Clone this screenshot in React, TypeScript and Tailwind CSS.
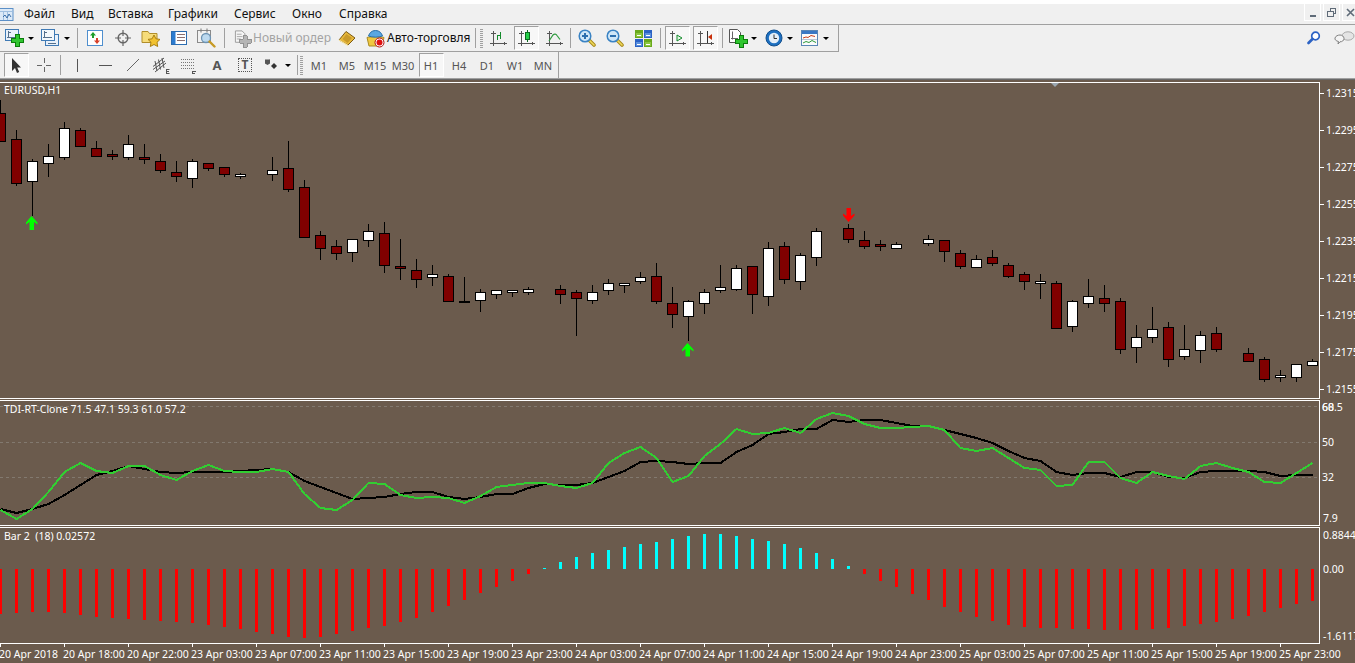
import type { ReactNode } from "react";

type Candle = [number, number, number, number, number, "r" | "w"];

// k, high, body top, body bottom, low, colour
const candles: Candle[] = [
  [0, 100, 113, 142, 142, "r"], [1, 130, 139, 184, 186, "r"], [2, 159, 161, 182, 216, "w"], [3, 144, 156, 164, 177, "w"],
  [4, 122, 128, 158, 160, "w"], [5, 128, 130, 147, 147, "r"], [6, 141, 148, 157, 157, "r"], [7, 150, 154, 157, 160, "r"],
  [8, 135, 144, 158, 160, "w"], [9, 144, 157, 160, 164, "r"], [10, 154, 161, 171, 173, "r"], [11, 161, 172, 177, 182, "r"],
  [12, 159, 161, 179, 188, "w"], [13, 163, 163, 169, 171, "r"], [14, 167, 167, 175, 177, "r"], [15, 173, 174, 177, 179, "w"],
  [17, 157, 170, 175, 181, "w"], [18, 141, 168, 190, 192, "r"], [19, 180, 187, 238, 238, "r"], [20, 231, 235, 249, 260, "r"],
  [21, 240, 246, 254, 260, "r"], [22, 239, 239, 253, 262, "w"], [23, 224, 231, 241, 247, "w"], [24, 222, 233, 266, 273, "r"],
  [25, 239, 266, 269, 280, "r"], [26, 259, 270, 280, 288, "r"], [27, 265, 274, 278, 286, "w"], [28, 274, 276, 302, 302, "r"],
  [29, 277, 301, 303, 303, "r"], [30, 289, 292, 301, 312, "w"], [31, 290, 290, 295, 299, "w"], [32, 290, 290, 293, 297, "w"],
  [33, 287, 289, 293, 295, "w"], [35, 285, 289, 295, 304, "r"], [36, 290, 292, 299, 336, "r"], [37, 285, 292, 301, 304, "w"],
  [38, 279, 283, 291, 295, "w"], [39, 283, 283, 286, 293, "w"], [40, 272, 277, 282, 284, "w"], [41, 263, 276, 302, 304, "r"],
  [42, 287, 303, 315, 328, "r"], [43, 300, 301, 317, 341, "w"], [44, 289, 292, 304, 314, "w"], [45, 265, 287, 291, 293, "w"],
  [46, 265, 268, 290, 291, "w"], [47, 266, 266, 295, 314, "r"], [48, 242, 248, 297, 306, "w"], [49, 242, 246, 280, 284, "r"],
  [50, 253, 255, 282, 290, "w"], [51, 228, 231, 258, 266, "w"], [53, 224, 228, 240, 243, "r"], [54, 231, 240, 247, 249, "r"],
  [55, 240, 244, 247, 251, "r"], [56, 242, 244, 249, 249, "w"], [58, 235, 239, 244, 246, "w"], [59, 240, 240, 252, 262, "r"],
  [60, 250, 253, 267, 269, "r"], [61, 255, 259, 268, 268, "w"], [62, 250, 257, 264, 266, "r"], [63, 263, 265, 277, 278, "r"],
  [64, 272, 274, 282, 290, "r"], [65, 274, 281, 284, 299, "w"], [66, 281, 283, 329, 329, "r"], [67, 300, 301, 327, 332, "w"],
  [68, 279, 296, 304, 308, "w"], [69, 285, 298, 304, 312, "r"], [70, 298, 301, 350, 354, "r"], [71, 325, 337, 348, 363, "w"],
  [72, 307, 329, 338, 343, "w"], [73, 322, 327, 360, 367, "r"], [74, 325, 349, 357, 360, "w"], [75, 331, 335, 351, 363, "w"],
  [76, 327, 333, 350, 352, "r"], [78, 348, 353, 362, 362, "r"], [79, 357, 359, 380, 382, "r"], [80, 370, 375, 378, 382, "w"],
  [81, 364, 364, 378, 382, "w"], [82, 359, 361, 366, 366, "w"],
];

const greenLine = [
  510, 519, 509, 492, 472, 463, 471, 473, 466, 466, 475, 480, 471, 465, 471, 472, 472, 469, 472, 494, 508, 510, 500, 483, 484, 495, 498, 497, 498,
  503, 496, 487, 485, 483, 483, 486, 488, 483, 463, 453, 447, 458, 482, 476, 456, 444, 429, 434, 433, 428, 433, 419, 413, 416, 424, 428, 428,
  427, 426, 430, 448, 451, 448, 458, 468, 470, 486, 485, 462, 462, 478, 483, 472, 476, 479, 466, 463, 468, 472, 482, 483, 473, 463,
];

const blackLine = [
  509, 513, 509, 504, 495, 485, 475, 471, 466, 469, 472, 473, 472, 472, 472, 471, 470, 469, 472, 481, 487, 493, 499, 498, 497, 494, 492, 492, 497,
  499, 497, 494, 494, 488, 484, 485, 485, 483, 477, 471, 462, 461, 462, 464, 463, 463, 452, 445, 434, 432, 429, 429, 420, 422, 420, 420, 423,
  426, 426, 430, 434, 438, 443, 451, 458, 461, 472, 475, 473, 473, 477, 472, 472, 477, 478, 472, 471, 471, 471, 472, 476, 475, 475,
];

// end of each histogram bar, the other end sits on the zero line at 569
const histogram = [
  614, 613, 612, 612, 613, 615, 617, 618, 619, 620, 621, 622, 623, 625, 627, 629, 632, 634, 637, 638, 637, 634, 631, 628, 626, 622, 618, 612, 606,
  600, 593, 587, 581, 574, 568, 562, 557, 553, 550, 547, 544, 542, 539, 536, 534, 534, 536, 539, 541, 544, 548, 553, 559, 566, 574, 581, 587,
  594, 600, 607, 612, 617, 621, 625, 627, 628, 628, 629, 629, 630, 630, 630, 629, 628, 626, 624, 622, 619, 616, 612, 608, 604, 601,
];

const prices = ["1.2315", "1.2295", "1.2275", "1.2255", "1.2235", "1.2215", "1.2195", "1.2175", "1.2155"];

const times = [
  "20 Apr 2018", "20 Apr 18:00", "20 Apr 22:00", "23 Apr 03:00", "23 Apr 07:00", "23 Apr 11:00", "23 Apr 15:00",
  "23 Apr 19:00", "23 Apr 23:00", "24 Apr 03:00", "24 Apr 07:00", "24 Apr 11:00", "24 Apr 15:00", "24 Apr 19:00",
  "24 Apr 23:00", "25 Apr 03:00", "25 Apr 07:00", "25 Apr 11:00", "25 Apr 15:00", "25 Apr 19:00", "25 Apr 23:00",
];

const points = (ys: number[]) => ys.map((y, k) => `${k * 16 + 0.5},${y}`).join(" ");

function Icon({ children, w = 20, h = 20 }: { children: ReactNode; w?: number; h?: number }) {
  return (
    <svg width={w} height={h} viewBox={`0 0 ${w} ${h}`} className="block">
      {children}
    </svg>
  );
}

function Btn({ children, active }: { children: ReactNode; active?: boolean }) {
  return (
    <div className="flex h-[24px] w-[28px] shrink-0 items-center justify-center">
      {active ? (
        <div className="flex h-[24px] w-[25px] items-center justify-center border border-t-[#a0a0a0] border-l-[#a0a0a0] border-r-white border-b-white bg-[#f7f7f7]">
          {children}
        </div>
      ) : (
        children
      )}
    </div>
  );
}

function Caret() {
  return <div className="h-0 w-0 border-x-[3px] border-t-[3px] border-x-transparent border-t-black" />;
}

function Drop({ children }: { children: ReactNode }) {
  return (
    <div className="flex h-[24px] w-[36px] shrink-0 items-center">
      <div className="flex w-[26px] justify-center">{children}</div>
      <Caret />
    </div>
  );
}

function Sep({ className }: { className: string }) {
  return (
    <div className={`flex shrink-0 justify-center ${className}`}>
      <div className="h-[20px] w-px bg-[#a0a0a0]" />
    </div>
  );
}

function Grip() {
  return (
    <div className="flex w-[5px] shrink-0 justify-center">
      <div className="h-[19px] w-[3px] bg-[repeating-linear-gradient(to_bottom,#a0a0a0_0_1px,#f0f0f0_1px_2px)]" />
    </div>
  );
}

function Axes({ x = 0 }: { x?: number }) {
  return (
    <path d={`M${x + 4.5} 2v15M${x + 1} 14.5h17M${x + 2} 4.5h5M${x + 15.5} 13v3`} stroke="#555" fill="none" shapeRendering="crispEdges" />
  );
}

function Plus({ x, y, color = "#2fc52f", edge = "#0b7d0b" }: { x: number; y: number; color?: string; edge?: string }) {
  return (
    <path
      d={`M${x + 4} ${y + 0.5}h4v4h4v4h-4v4h-4v-4h-4v-4h4z`}
      fill={color}
      stroke={edge}
      shapeRendering="crispEdges"
    />
  );
}

function Lens({ sign }: { sign: "+" | "-" }) {
  return (
    <Icon w={18} h={18}>
      <path d="M10.5 10.5l5.5 5.5" stroke="#a88a1c" strokeWidth="3.6" strokeLinecap="round" />
      <path d="M10.5 10.5l5.5 5.5" stroke="#f0d95a" strokeWidth="1.6" strokeLinecap="round" />
      <circle cx="7" cy="7" r="5.8" fill="#cfe6f7" stroke="#3a83c4" strokeWidth="1.5" />
      <path d={sign === "+" ? "M4 7h6M7 4v6" : "M4 7h6"} stroke="#2d6fae" strokeWidth="2" />
    </Icon>
  );
}

function Panel({ x, y, top, body }: { x: number; y: number; top: string; body: string }) {
  return (
    <g shapeRendering="crispEdges">
      <rect x={x + 0.5} y={y + 0.5} width="7" height="7" fill={body} stroke={top} />
      <rect x={x + 1} y={y + 1} width="6" height="2" fill={top} />
      <path d={`M${x + 2} ${y + 5.5}h4`} stroke="#fff" />
    </g>
  );
}

function ChartPlot() {
  return (
    <svg width={1319} height={315} viewBox="0 83 1319 315" className="block">
      <g shapeRendering="crispEdges">
        {candles.map(([k, high, top, bottom, low, c]) => (
          <g key={k}>
            <path d={`M${k * 16 + 0.5} ${high}V${low}`} stroke="#000" />
            <rect
              x={k * 16 - 4.5}
              y={top + 0.5}
              width={10}
              height={bottom - top - 1}
              fill={c === "r" ? "#800000" : "#fff"}
              stroke="#000"
            />
          </g>
        ))}
      </g>
      <path d="M31.5 216l6 6.5v2l-3.5-2.5v8h-4.5v-8l-3.5 2.5v-2z" fill="#00ff00" />
      <path d="M687.5 343l6 6.5v2l-3.5-2.5v7.500h-4.500v-7.500l-3.500 2.500v-2z" fill="#00ff00" />
      <path d="M848.5 222l6-6.500v-2l-3.500 2.500v-8h-4.500v8l-3.500-2.500v2z" fill="#ff0000" />
    </svg>
  );
}

function TdiPlot() {
  return (
    <svg width={1319} height={124} viewBox="0 401 1319 124" className="block">
      <path d="M0 406.5H1319M0 442.5H1319M0 477.5H1319" stroke="#82796f" strokeDasharray="3 3" shapeRendering="crispEdges" />
      <polyline points={points(blackLine)} fill="none" stroke="#000" strokeWidth="2" shapeRendering="crispEdges" />
      <polyline points={points(greenLine)} fill="none" stroke="#32cd32" strokeWidth="2" shapeRendering="crispEdges" />
    </svg>
  );
}

function BarPlot() {
  return (
    <svg width={1319} height={115} viewBox="0 528 1319 115" className="block">
      <g shapeRendering="crispEdges">
        {histogram.map((y, k) =>
          y > 569 ? (
            <rect key={k} x={k * 16 - 1} y={569} width={3} height={y - 569} fill="#ff0000" />
          ) : (
            <rect key={k} x={k * 16 - 1} y={y} width={3} height={569 - y} fill="#00ffff" />
          ),
        )}
      </g>
    </svg>
  );
}

export default function App() {
  return (
    <div className="flex h-[663px] w-[1355px] flex-col overflow-hidden bg-white font-['Noto_Sans',sans-serif] text-[11px] leading-none text-black">
      {/* menu */}
      <div className="mt-[4px] flex h-[21px] shrink-0 border-b border-[#a0a0a0] bg-[#f0f0f0] text-[12px] text-[#111]">
        <div className="flex w-[24px] items-center">
          <Icon w={14} h={15}>
            <rect x="-1" y="1.500" width="14" height="12" fill="#dbe9f7" stroke="#5b8fc7" />
            <path d="M0 4.500h12M3.500 5v8M7.500 5v8" stroke="#9fbfe0" />
            <path d="M3 10l2-2 2 3 2-4 2 3" stroke="#3a6ea8" fill="none" />
          </Icon>
        </div>
        <div className="flex w-[47px] items-center">Файл</div>
        <div className="flex w-[37px] items-center">Вид</div>
        <div className="flex w-[60px] items-center">Вставка</div>
        <div className="flex w-[66px] items-center">Графики</div>
        <div className="flex w-[58px] items-center">Сервис</div>
        <div className="flex w-[47px] items-center">Окно</div>
        <div className="flex items-center">Справка</div>
        <div className="ml-auto -mt-[1px] flex w-[51px] gap-[2px] overflow-hidden">
          <div className="flex h-[18px] w-[17px] shrink-0 items-end justify-center border border-white pb-[3px]">
            <div className="h-[2px] w-[6px] bg-[#5f6b78]" />
          </div>
          <div className="flex h-[18px] w-[17px] shrink-0 items-center justify-center border border-white">
            <Icon w={9} h={9}>
              <path d="M3 2.500V.5h5.500v5H6.500M.5 3h5.500v5.500H.5z" fill="none" stroke="#5f6b78" shapeRendering="crispEdges" />
            </Icon>
          </div>
          <div className="flex h-[18px] w-[17px] shrink-0 items-center justify-center border border-white">
            <Icon w={9} h={9}>
              <path d="M1 1l7 7M8 1l-7 7" stroke="#5f6b78" strokeWidth="1.600" />
            </Icon>
          </div>
        </div>
      </div>

      {/* standard toolbar */}
      <div className="flex h-[27px] shrink-0 bg-[#f0f0f0]">
        <div className="flex w-[839px] shrink-0 items-center border-r border-b border-[#a0a0a0] pl-[2px]">
          <Drop>
            <Icon>
              <rect x=".5" y="1.500" width="13" height="11" fill="#e9f1fa" stroke="#3f7ab5" shapeRendering="crispEdges" />
              <path d="M3.500 3v7M2 9.500h9M2.500 4.500h3" stroke="#55708c" shapeRendering="crispEdges" />
              <Plus x={6} y={6} />
            </Icon>
          </Drop>
          <Drop>
            <Icon>
              <rect x="4.500" y="6.500" width="13" height="11" fill="#e9f1fa" stroke="#3f7ab5" shapeRendering="crispEdges" />
              <rect x=".5" y="1.500" width="13" height="11" fill="#f4f8fc" stroke="#3f7ab5" shapeRendering="crispEdges" />
              <path d="M3.500 3v7M2 9.500h9M2.500 4.500h3M7 15.500h8" stroke="#55708c" shapeRendering="crispEdges" />
            </Icon>
          </Drop>
          <Sep className="w-[7px]" />
          <Btn>
            <Icon w={17} h={17}>
              <rect x=".5" y=".5" width="15" height="15" fill="#fff" stroke="#4f8fce" strokeWidth="1.500" shapeRendering="crispEdges" />
              <path d="M6 2l3 3.500H7V8H5V5.500H3z" fill="#1f9e2c" />
              <path d="M10 14l-3-3.500h2V8h2v2.500h2z" fill="#d8402a" />
            </Icon>
          </Btn>
          <Btn>
            <Icon w={16} h={16}>
              <circle cx="8" cy="8" r="4.800" fill="none" stroke="#666" strokeWidth="1.500" />
              <path d="M8 0v6M8 10v6M0 8h6M10 8h6" stroke="#666" strokeWidth="1.200" />
            </Icon>
          </Btn>
          <Btn>
            <Icon>
              <path d="M1 3.500h6l1.500 2H16v9H1z" fill="#f6dc7a" stroke="#b08d2a" />
              <path d="M13 7l1.900 3.800 4.100.6-3 2.900.7 4.200L13 16.500 9.300 18.500l.7-4.200-3-2.900 4.100-.6z" fill="#f2c230" stroke="#a87f12" />
            </Icon>
          </Btn>
          <Btn>
            <Icon w={17} h={16}>
              <rect x=".5" y="1.500" width="15" height="13" rx="1" fill="#fff" stroke="#2b6cb0" shapeRendering="crispEdges" />
              <rect x="1" y="2" width="3.500" height="12" fill="#2b7bd0" />
              <path d="M6 4.500h8M6 7.500h8M6 10.500h8" stroke="#8a6f6f" shapeRendering="crispEdges" />
            </Icon>
          </Btn>
          <Btn>
            <Icon>
              <rect x=".5" y="2.500" width="13" height="12" fill="#f2f2f2" stroke="#8a8a8a" shapeRendering="crispEdges" />
              <path d="M4 .5v4M10 .5v4" stroke="#777" />
              <circle cx="9" cy="10" r="4.500" fill="#bcd9ef" stroke="#6d93b3" strokeWidth="1.300" />
              <path d="M12.500 13.500l5 5" stroke="#c79a24" strokeWidth="2.400" strokeLinecap="round" />
            </Icon>
          </Btn>
          <Sep className="w-[7px]" />
          <div className="flex h-[24px] w-[103px] shrink-0 items-center pl-[6px] text-[12px] text-[#a3a3a3]">
            <Icon w={19} h={19}>
              <path d="M1.500 1.500h7l3 3v9h-10z" fill="#f5f5f5" stroke="#9a9a9a" />
              <path d="M3 5h5M3 7.500h6M3 10h4" stroke="#a8a8a8" />
              <Plus x={6} y={6} color="#b5b5b5" edge="#8e8e8e" />
            </Icon>
            <span className="ml-[1px] whitespace-nowrap">Новый ордер</span>
          </div>
          <div className="ml-[2px]">
            <Btn>
              <Icon w={18} h={16}>
                <path d="M1 10L8 1.500l9 6.500-7 7z" fill="#e8b93c" stroke="#7d5a12" />
                <path d="M8.500 4L14 8l-4.500 5-5-4z" fill="#c99a2a" />
                <path d="M1 10l9 5.500" stroke="#fbe9a8" strokeWidth="1.200" />
              </Icon>
            </Btn>
          </div>
          <div className="flex h-[24px] w-[111px] shrink-0 items-center pl-[5px] text-[12px] text-[#111]">
            <Icon w={19} h={19}>
              <path d="M1 8.500c2-1 15-1 17 0l-2 8.500H3z" fill="#f0c840" stroke="#a98a20" />
              <path d="M2.500 7c1-3 3-5.500 7-5.500S15.500 4 16.500 7c-4 1.500-10 1.500-14 0z" fill="#5aa7e0" stroke="#2a6fa8" />
              <circle cx="13.500" cy="13.500" r="4.500" fill="#fff" stroke="#b01010" />
              <circle cx="13.500" cy="13.500" r="3" fill="#e01010" />
            </Icon>
            <span className="ml-[2px] whitespace-nowrap">Авто-торговля</span>
          </div>
          <Sep className="w-[7px]" />
          <Grip />
          <Btn>
            <Icon w={19} h={19}>
              <Axes />
              <path d="M8.500 11V5.500M8.500 6h3M11.500 3v7" stroke="#138a2b" fill="none" shapeRendering="crispEdges" />
            </Icon>
          </Btn>
          <Btn active>
            <Icon w={19} h={19}>
              <Axes />
              <path d="M10.500 1v12" stroke="#0b6b1e" shapeRendering="crispEdges" />
              <rect x="8.500" y="3.500" width="4" height="7" fill="#25d04a" stroke="#0b6b1e" shapeRendering="crispEdges" />
            </Icon>
          </Btn>
          <Btn>
            <Icon w={19} h={19}>
              <Axes />
              <path d="M4 12l4-6c1.500-1.500 3-1 4 .5l3 4" stroke="#2f9b3e" strokeWidth="1.200" fill="none" />
            </Icon>
          </Btn>
          <Sep className="w-[5px]" />
          <Btn><Lens sign="+" /></Btn>
          <Btn><Lens sign="-" /></Btn>
          <Btn>
            <Icon w={17} h={17}>
              <Panel x={0} y={0} top="#69a81c" body="#8cc63f" />
              <Panel x={9} y={0} top="#2b62c4" body="#5a8fdd" />
              <Panel x={0} y={9} top="#2b62c4" body="#5a8fdd" />
              <Panel x={9} y={9} top="#69a81c" body="#8cc63f" />
            </Icon>
          </Btn>
          <Sep className="w-[6px]" />
          <Btn active>
            <Icon w={19} h={19}>
              <Axes />
              <path d="M9 6v6l5-3z" fill="#e4f5e4" stroke="#138a2b" />
            </Icon>
          </Btn>
          <Btn active>
            <Icon w={19} h={19}>
              <Axes />
              <path d="M11.500 2v12" stroke="#333" shapeRendering="crispEdges" />
              <path d="M12 8l4-3v6z" fill="#c8300c" />
            </Icon>
          </Btn>
          <Sep className="w-[6px]" />
          <Drop>
            <Icon>
              <path d="M1.500 1.500h8l3 3v10h-11z" fill="#fff" stroke="#555" />
              <path d="M4.500 3.500v8M3 10.500h7" stroke="#666" />
              <Plus x={7} y={7} />
            </Icon>
          </Drop>
          <Drop>
            <Icon w={19} h={19}>
              <circle cx="9" cy="9" r="8" fill="#1d6fc0" stroke="#124f8d" />
              <circle cx="9" cy="9" r="5.200" fill="#e3eef8" />
              <path d="M9 5.500V9.500h3" stroke="#333" fill="none" />
            </Icon>
          </Drop>
          <Drop>
            <Icon w={19} h={18}>
              <rect x=".5" y="1.500" width="16" height="15" fill="#fbfbfb" stroke="#5a86b5" shapeRendering="crispEdges" />
              <rect x="1" y="2" width="15" height="3" fill="#3a78c4" />
              <path d="M1 10.500h15" stroke="#b9c7d6" />
              <path d="M2 9l3-1 2 .5 3-2 4 1" stroke="#c8401c" fill="none" />
              <path d="M2 14l3-1.500 3 1 3-2 4 2" stroke="#2c9a3a" fill="none" />
            </Icon>
          </Drop>
        </div>
        <div className="ml-auto flex w-[48px] shrink-0 items-center pb-[1px]">
          <Icon w={14} h={14}>
            <circle cx="8.500" cy="5" r="3.800" fill="#fff" stroke="#2b62c4" strokeWidth="1.700" />
            <path d="M5.500 8l-4 4" stroke="#2b62c4" strokeWidth="2.600" strokeLinecap="round" />
          </Icon>
          <div className="ml-[13px]">
            <Icon w={21} h={15}>
              <ellipse cx="14" cy="5" rx="6" ry="4.200" fill="#e4e4e4" stroke="#a8a8a8" />
              <path d="M4 13l.5-2.500C2 10 .5 8.500 1 7c.5-2 3-3 5-3s4 1.500 4 3.500S8 11 6 10.800z" fill="#f4f4f4" stroke="#808080" />
            </Icon>
          </div>
        </div>
      </div>

      {/* line studies and periods */}
      <div className="flex h-[26px] shrink-0 bg-[#f0f0f0]">
        <div className="flex w-[559px] shrink-0 items-center border-r border-[#a0a0a0] pl-[2px] text-[11px] text-[#555]">
          <Btn active>
            <Icon w={13} h={17}>
              <path d="M2 1v13l3-3 2 5 2.200-1-2-4.500H11z" fill="#333" />
            </Icon>
          </Btn>
          <Btn>
            <Icon w={16} h={16}>
              <path d="M8 1v5M8 10v5M1 8h5M10 8h5" stroke="#666" shapeRendering="crispEdges" />
            </Icon>
          </Btn>
          <Sep className="w-[5px]" />
          <Btn><div className="h-[13px] w-px bg-[#555]" /></Btn>
          <Btn><div className="h-px w-[13px] bg-[#555]" /></Btn>
          <Btn>
            <Icon w={14} h={14}>
              <path d="M1 13L13 1" stroke="#666" />
            </Icon>
          </Btn>
          <Btn>
            <Icon w={18} h={17}>
              <path d="M1 9.500L12 1M1 12.500L13 4M3 15L14 6M3 4l2 10M6.500 2.500l2 10M10 1l2 10" stroke="#555" fill="none" />
              <path d="M14 12.500h3.500M14 14.500h3M14 16.500h3.500M14.500 12v5" stroke="#555" />
            </Icon>
          </Btn>
          <Btn>
            <Icon w={16} h={17}>
              <path d="M0 2.500h13M0 5.500h13M0 8.500h13M0 11.500h13" stroke="#777" strokeDasharray="1 1" />
              <path d="M11 14.500h4M11 16.500h3M11.500 14v3" stroke="#555" />
            </Icon>
          </Btn>
          <Btn><span className="text-[13px] font-bold text-[#555]">A</span></Btn>
          <Btn>
            <div className="flex h-[14px] w-[14px] items-center justify-center border border-dotted border-[#555] text-[12px] font-bold text-[#555]">T</div>
          </Btn>
          <Drop>
            <Icon w={16} h={15}>
              <path d="M1 1.500h5v4L3.500 7 1 5.500z" fill="#555" />
              <path d="M7 6l3 3-3 3-3-3z" fill="#333" transform="translate(3 -1)" />
              <path d="M1 5l5-3" stroke="#555" />
            </Icon>
          </Drop>
          <Sep className="w-[4px]" />
          <Grip />
          <div className="ml-px flex">
            <Btn>M1</Btn>
            <Btn>M5</Btn>
            <Btn>M15</Btn>
            <Btn>M30</Btn>
            <Btn active>H1</Btn>
            <Btn>H4</Btn>
            <Btn>D1</Btn>
            <Btn>W1</Btn>
            <Btn>MN</Btn>
          </div>
        </div>
      </div>
      <div className="h-px shrink-0 bg-[#a0a0a0]" />
      <div className="h-px shrink-0 bg-[#696969]" />

      {/* charts */}
      <div className="relative flex-1 bg-[#6b5b4d] pt-[2px] text-[10.500px] text-white">
        <div className="absolute top-[2px] left-[1050px] h-0 w-0 border-x-[5px] border-t-[5px] border-x-transparent border-t-[#9aa6b0]" />

        <div className="flex h-[317px]">
          <div className="relative w-[1320px] shrink-0 border-y border-r border-white">
            <ChartPlot />
            <span className="absolute top-[2px] left-[4px]">EURUSD,H1</span>
          </div>
          <div className="flex flex-1 flex-col justify-between pt-[5px] pb-[4px]">
            {prices.map((p) => (
              <div key={p} className="flex h-[12px] items-center whitespace-nowrap">
                <div className="mr-[2px] h-px w-[4px] bg-white" />
                {p}
              </div>
            ))}
          </div>
        </div>

        <div className="mt-px flex h-[126px]">
          <div className="relative w-[1320px] shrink-0 border-y border-r border-white">
            <TdiPlot />
            <span className="absolute top-[3px] left-[4px]">TDI-RT-Clone 71.5 47.1 59.3 61.0 57.2</span>
          </div>
          <div className="relative flex-1 pl-[2px]">
            <div className="mt-px flex h-[12px] items-center">68.5</div>
            <div className="absolute top-px left-[2px] flex h-[12px] items-center">60</div>
            <div className="mt-[23px] flex h-[12px] items-center">50</div>
            <div className="mt-[23px] flex h-[12px] items-center">32</div>
            <div className="mt-[29px] flex h-[12px] items-center pl-px">7.9</div>
          </div>
        </div>

        <div className="mt-px flex h-[117px]">
          <div className="relative w-[1320px] shrink-0 border-y border-r border-white">
            <BarPlot />
            <span className="absolute top-[3px] left-[4px] whitespace-pre">Bar 2  (18) 0.02572</span>
          </div>
          <div className="flex-1 overflow-hidden pl-[3px] whitespace-nowrap">
            <div className="mt-[2px] flex h-[12px] items-center">0.88449</div>
            <div className="mt-[22px] flex h-[12px] items-center">0.00</div>
            <div className="mt-[55px] flex h-[12px] items-center">-1.6117</div>
          </div>
        </div>

        <div className="flex">
          {times.map((t) => (
            <div key={t} className="w-[64px] shrink-0">
              <div className="h-[3px] w-px bg-white" />
              <div className="mt-[2px] -ml-px whitespace-nowrap">{t}</div>
            </div>
          ))}
        </div>
      </div>
    </div>
  );
}
